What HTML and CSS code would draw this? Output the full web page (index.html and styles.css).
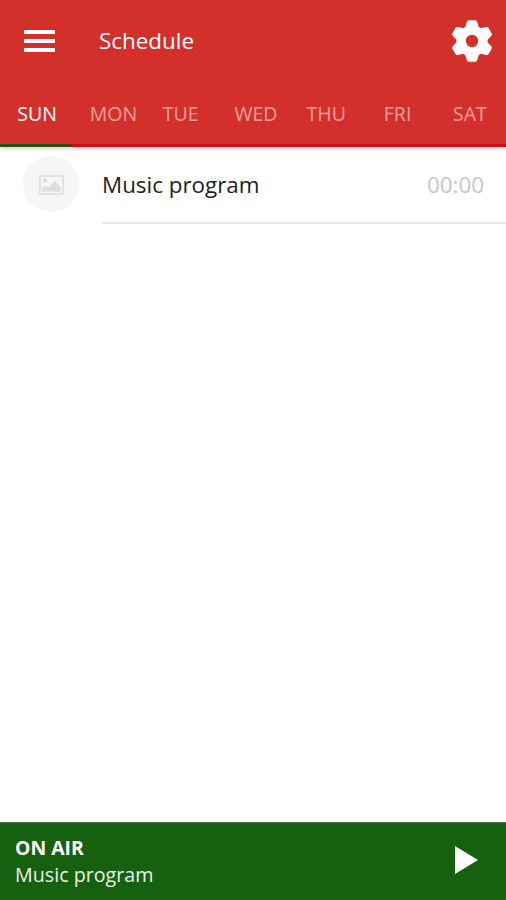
FILE: index.html
```html
<!DOCTYPE html>
<html lang="en">
<head>
  <meta charset="UTF-8" />
  <meta name="viewport" content="width=device-width, initial-scale=1.0"/>
  <title>Schedule</title>
  <link rel="stylesheet" href="styles.css">
</head>
<body>
  <header class="header">
    <div class="toolbar">
      <svg class="menu-icon" viewBox="0 0 31 22">
        <path d="M0 0h31v4H0zM0 9h31v4H0zM0 18h31v4H0z" fill="#fff"/>
      </svg>
      <h1>Schedule</h1>
      <svg class="settings-icon" viewBox="-21 -21 42 42">
        <g fill="#fff" stroke="#fff" stroke-width="4" stroke-linejoin="round">
          <path d="M-3.2-18.8h6.4L5.5-11v22L3.2 18.8h-6.4L-5.5 11v-22z"/>
          <path d="M-3.2-18.8h6.4L5.5-11v22L3.2 18.8h-6.4L-5.5 11v-22z" transform="rotate(60)"/>
          <path d="M-3.2-18.8h6.4L5.5-11v22L3.2 18.8h-6.4L-5.5 11v-22z" transform="rotate(120)"/>
        </g>
        <circle r="15.6" fill="#fff"/>
        <circle r="6.2" fill="#d32f2b"/>
      </svg>
    </div>
    <nav class="tabs">
      <a class="tab active"><span>SUN</span></a>
      <a class="tab mon"><span>MON</span></a>
      <a class="tab"><span>TUE</span></a>
      <a class="tab wed"><span>WED</span></a>
      <a class="tab thu"><span>THU</span></a>
      <a class="tab"><span>FRI</span></a>
      <a class="tab"><span>SAT</span></a>
    </nav>
  </header>

  <main class="list">
    <div class="item">
      <div class="thumb">
        <svg viewBox="0 0 25 20">
          <rect x="1" y="1" width="23" height="18" fill="none" stroke="#dedede" stroke-width="1.6"/>
          <circle cx="6" cy="5.8" r="2.2" fill="#dedede"/>
          <path d="M3 16.5v-3l4-3.2 3 2 5.8-6.3 6.2 6.5v4z" fill="#dedede"/>
        </svg>
      </div>
      <div class="info">
        <span class="name">Music program</span>
        <span class="time">00:00</span>
      </div>
    </div>
  </main>

  <footer class="player">
    <div class="now">
      <strong>ON AIR</strong>
      <p>Music program</p>
    </div>
    <svg class="play-icon" viewBox="0 0 23 28">
      <path d="M0 0l23 14L0 28z" fill="#fff"/>
    </svg>
  </footer>
</body>
</html>
```
FILE: styles.css
```css
:root {
  --primary: #d32f2b;
  --primary-dark: #cc1010;
  --accent: #16610f;
}

* {
  margin: 0;
  padding: 0;
  box-sizing: border-box;
}

body {
  font-family: "Open Sans", sans-serif;
  background: #fff;
  height: 100vh;
  display: flex;
  flex-direction: column;
  overflow: hidden;
}

.header {
  height: 147px;
  background: var(--primary);
  box-shadow: 0 1px 5px rgba(0, 0, 0, 0.25);
}

.toolbar {
  height: 82px;
  padding: 0 13.5px 0 24px;
  display: flex;
  align-items: center;
}

.menu-icon {
  width: 31px;
  height: 22px;
}

.toolbar h1 {
  flex: 1;
  margin-left: 44px;
  padding-bottom: 2px;
  font-size: 22.4px;
  font-weight: 400;
  color: #fff;
}

.settings-icon {
  width: 42px;
  height: 42px;
}

.tabs {
  height: 65px;
  display: grid;
  grid-template-columns: repeat(7, minmax(0, 1fr));
  border-bottom: 3px solid var(--primary-dark);
}

.tab {
  height: 65px;
  padding-top: 18px;
  text-align: center;
  font-size: 19.5px;
  line-height: 27px;
  color: #f3a09d;
}

.tab.active {
  padding-left: 2px;
  color: #fff;
  border-bottom: 3px solid #285010;
}

.tab.mon {
  padding-left: 10px;
}

.tab.wed {
  padding-left: 6px;
}

.tab.thu {
  padding-left: 2px;
}

.list {
  flex: 1;
}

.item {
  display: flex;
  height: 77px;
  padding-left: 23px;
}

.thumb {
  width: 56px;
  height: 56px;
  margin-top: 9px;
  padding-top: 1px;
  border-radius: 50%;
  background: #f6f6f6;
  display: flex;
  align-items: center;
  justify-content: center;
}

.thumb svg {
  width: 25px;
  height: 20px;
}

.info {
  flex: 1;
  margin-left: 23px;
  padding-right: 22px;
  display: flex;
  align-items: center;
  justify-content: space-between;
  border-bottom: 2px solid #e8e8e8;
  font-size: 22.4px;
}

.name {
  color: #222;
}

.time {
  color: #c6c6c6;
}

.player {
  height: 78px;
  padding: 0 28px 0 15px;
  display: flex;
  align-items: center;
  justify-content: space-between;
  background: var(--accent);
  border-top: 1px solid #4e7b49;
  color: #fff;
}

.now {
  padding-bottom: 1px;
  font-size: 19.7px;
  line-height: 27px;
}

.now strong {
  display: block;
  font-size: 19.4px;
}

.now p {
  color: #e9f2e8;
}

.play-icon {
  width: 23px;
  height: 28px;
  margin-bottom: 3px;
}
```
